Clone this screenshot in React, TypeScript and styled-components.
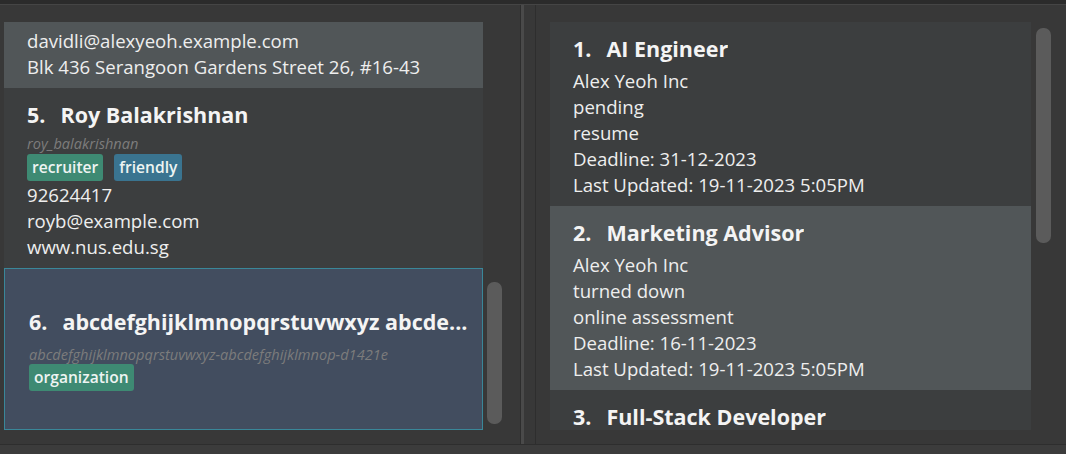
import React from 'react';
import styled, { createGlobalStyle, css } from 'styled-components';

const GlobalStyle = createGlobalStyle`
	html, body {
		margin: 0;
		padding: 0;
		background: #383838;
	}
	body {
		font-family: "Open Sans", "Noto Sans", sans-serif;
		color: #f2f2f2;
	}
`;

const Window = styled.div`
	width: 1066px;
	height: 454px;
	display: flex;
	flex-direction: column;
	background: #383838;
	overflow: hidden;
`;
const TopStrip = styled.div`
	height: 4px;
	flex-shrink: 0;
	background: #2b2b2b;
	border-bottom: 1px solid #454545;
`;
const Main = styled.div`
	flex: 1;
	display: flex;
	min-height: 0;
`;
const BottomStrip = styled.div`
	height: 9px;
	flex-shrink: 0;
	background: #3c3c3c;
	border-top: 1px solid #2e2e2e;
`;
const Pane = styled.div<{ $side: 'left' | 'right' }>`
	display: flex;
	gap: ${p => (p.$side === 'left' ? 4 : 5)}px;
	box-sizing: border-box;
	padding: 17px 0 14px ${p => (p.$side === 'left' ? 4 : 14)}px;
	${p => p.$side === 'left'
		? css`width: 521px; border-right: 1px solid #2e2e2e;`
		: css`flex: 1; border-left: 1px solid #2e2e2e;`}
`;
const Splitter = styled.div`
	width: 3px;
	background: #4a4a4a;
	margin-right: 11px;
	flex-shrink: 0;
`;
const ListView = styled.div<{ $width: number }>`
	width: ${p => p.$width}px;
	height: 100%;
	overflow: hidden;
	flex-shrink: 0;
`;
const Track = styled.div`
	width: 15px;
	height: 100%;
`;
const Thumb = styled.div<{ $offset: number; $size: number }>`
	margin-top: ${p => p.$offset}px;
	height: ${p => p.$size}px;
	border-radius: 7px;
	background: #5b5b5b;
`;

const Title = styled.div`
	display: flex;
	height: 30px;
	line-height: 30px;
	font-size: 21.5px;
	font-weight: 700;
	color: #f4f4f4;
	white-space: nowrap;
	overflow: hidden;
`;
const Id = styled.span`
	margin-right: 15px;
	flex-shrink: 0;
`;
const Name = styled.span`
	overflow: hidden;
	text-overflow: ellipsis;
`;
const Username = styled.div`
	margin-top: 2px;
	height: 22px;
	line-height: 22px;
	font-size: 14.6px;
	font-style: italic;
	color: #7c7c7c;
	white-space: nowrap;
`;
const Tags = styled.div`
	display: flex;
	gap: 11px;
	height: 28px;
`;
const Tag = styled.span<{ $kind: 'green' | 'blue' }>`
	height: 27px;
	line-height: 27px;
	padding: 0 5px;
	border-radius: 3px;
	font-size: 15.6px;
	font-weight: 600;
	color: #eef4f2;
	background: ${p => (p.$kind === 'green' ? '#3e8a73' : '#3a7490')};
`;
const Details = styled.div<{ $gap: number }>`
	margin-top: ${p => p.$gap}px;
`;
const Line = styled.div`
	height: 26px;
	line-height: 26px;
	font-size: 18.6px;
	color: #eeeeee;
	white-space: nowrap;
`;

const Cell = styled.div<{ $tone: 'dark' | 'light' | 'selected'; $top?: number }>`
	box-sizing: border-box;
	padding: ${p => p.$top ?? 12}px 8px 8px 23px;
	background: ${p => (p.$tone === 'light' ? '#515658' : p.$tone === 'selected' ? '#424d5f' : '#3c3e3f')};
	${p => p.$tone === 'selected' && css`
		border: 1px solid #3a8799;
		padding: 38px 8px 37px 24px;
		${Username} {
			margin-top: 7px;
			height: 20px;
			line-height: 20px;
		}
	`}
`;

type Application = {
	id: number;
	role: string;
	company: string;
	status: string;
	stage: string;
	deadline: string;
	updated: string;
};

const applications: Application[] = [
	{ id: 1, role: 'AI Engineer', company: 'Alex Yeoh Inc', status: 'pending', stage: 'resume', deadline: '31-12-2023', updated: '19-11-2023 5:05PM' },
	{ id: 2, role: 'Marketing Advisor', company: 'Alex Yeoh Inc', status: 'turned down', stage: 'online assessment', deadline: '16-11-2023', updated: '19-11-2023 5:05PM' },
	{ id: 3, role: 'Full-Stack Developer', company: 'Alex Yeoh Inc', status: 'pending', stage: 'interview', deadline: '01-12-2023', updated: '19-11-2023 5:05PM' },
];

const App = () => {
	return (
		<>
			<GlobalStyle />
			<Window>
				<TopStrip />
				<Main>
					<Pane $side='left'>
						<ListView $width={479}>
							<Cell $tone='light' $top={6}>
								<Line>davidli@alexyeoh.example.com</Line>
								<Line>Blk 436 Serangoon Gardens Street 26, #16-43</Line>
							</Cell>
							<Cell $tone='dark'>
								<Title><Id>5.</Id><Name>Roy Balakrishnan</Name></Title>
								<Username>roy_balakrishnan</Username>
								<Tags>
									<Tag $kind='green'>recruiter</Tag>
									<Tag $kind='blue'>friendly</Tag>
								</Tags>
								<Line>92624417</Line>
								<Line>royb@example.com</Line>
								<Line>www.nus.edu.sg</Line>
							</Cell>
							<Cell $tone='selected'>
								<Title><Id>6.</Id><Name>abcdefghijklmnopqrstuvwxyz abcde...</Name></Title>
								<Username>abcdefghijklmnopqrstuvwxyz-abcdefghijklmnop-d1421e</Username>
								<Tags>
									<Tag $kind='green'>organization</Tag>
								</Tags>
							</Cell>
						</ListView>
						<Track><Thumb $offset={260} $size={142} /></Track>
					</Pane>
					<Splitter />
					<Pane $side='right'>
						<ListView $width={481}>
							{applications.map((app, index) => (
								<Cell $tone={index % 2 === 1 ? 'light' : 'dark'} key={app.id}>
									<Title><Id>{app.id}.</Id><Name>{app.role}</Name></Title>
									<Details $gap={4}>
										<Line>{app.company}</Line>
										<Line>{app.status}</Line>
										<Line>{app.stage}</Line>
										<Line>Deadline: {app.deadline}</Line>
										<Line>Last Updated: {app.updated}</Line>
									</Details>
								</Cell>
							))}
						</ListView>
						<Track><Thumb $offset={6} $size={215} /></Track>
					</Pane>
				</Main>
				<BottomStrip />
			</Window>
		</>
	);
};

export default App;
